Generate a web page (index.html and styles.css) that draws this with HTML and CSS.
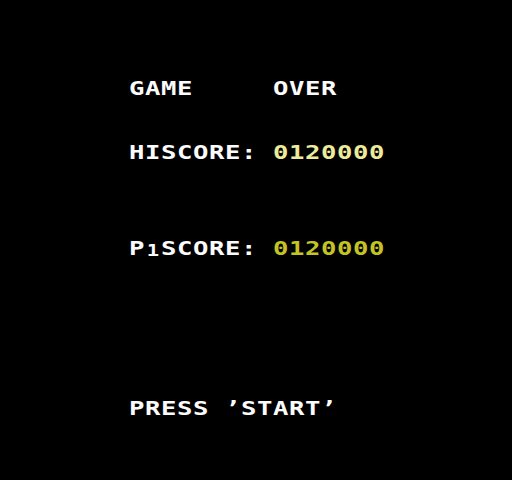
FILE: index.html
```html
<!DOCTYPE html>
<html lang="en">
<head>
  <meta charset="UTF-8">
  <title>Game Over</title>
  <link rel="stylesheet" href="styles.css">
</head>
<body>
  <div class="screen">
    <div class="line">GAME     OVER</div>
    <div class="line gap-hi">HISCORE: <span class="hi">0120000</span></div>
    <div class="line gap-p1">P<span class="sub">1</span>SCORE: <span class="p1">0120000</span></div>
    <div class="line gap-start">PRESS ’START’</div>
  </div>
</body>
</html>
```

FILE: styles.css
```css
html, body {
  margin: 0;
  padding: 0;
  background: #000;
}
.screen {
  width: 512px;
  height: 480px;
  box-sizing: border-box;
  padding: 80px 0 0 129px;
  color: #fcfcfc;
  font-family: "DejaVu Sans Mono", monospace;
  font-weight: bold;
  font-size: 20px;
  overflow: hidden;
}
/* chunky 16px cells: stretch the glyphs, squeeze the advance back */
.line {
  height: 16px;
  line-height: 16px;
  white-space: pre;
  letter-spacing: 0.46px;
  transform: scaleX(1.28);
  transform-origin: left top;
}
.gap-hi {
  margin-top: 48px;
}
.gap-p1 {
  margin-top: 80px;
}
.gap-start {
  margin-top: 144px;
}
.hi {
  color: #ecec9c;
}
.p1 {
  color: #c4c424;
}
.sub {
  display: inline-block;
  font-size: 16px;
  letter-spacing: 0;
  width: 12.5px;
  text-align: center;
  vertical-align: -1px;
}
```
